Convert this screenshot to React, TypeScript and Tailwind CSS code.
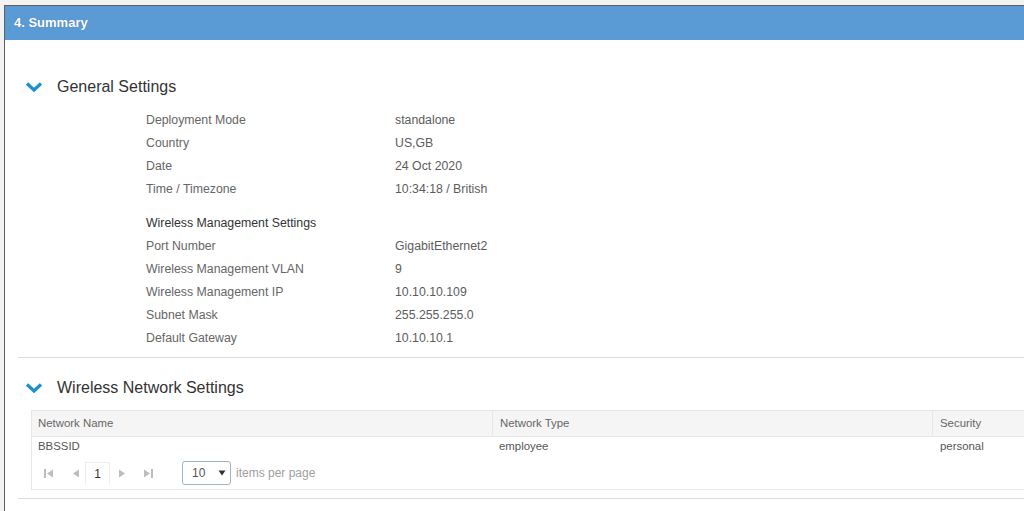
import React from "react";

const Chevron = () => (
  <svg width="18" height="12" viewBox="0 0 18 12" className="shrink-0">
    <path d="M2 2.5 L9 9 L16 2.5" fill="none" stroke="#1a8fd4" strokeWidth="3.2" strokeLinecap="butt" strokeLinejoin="miter" />
  </svg>
);

const Row = ({ label, value }: { label: string; value: string }) => (
  <div className="flex h-[23px] items-center text-[12.3px] text-[#666]">
    <div className="w-[249px] shrink-0">{label}</div>
    <div className="text-[#5c5c5c]">{value}</div>
  </div>
);

const Tri = ({ dir }: { dir: "l" | "r" }) => (
  <svg width="8" height="9" viewBox="0 0 8 9">
    {dir === "l" ? <path d="M7 0.5 L1 4.5 L7 8.5 Z" fill="#bdbdbd" /> : <path d="M1 0.5 L7 4.5 L1 8.5 Z" fill="#bdbdbd" />}
  </svg>
);

export default function App() {
  const font = { fontFamily: '"Liberation Sans", Arial, sans-serif' };
  return (
    <div className="h-[511px] w-[1024px] overflow-hidden bg-[#f3f4f2] pl-[4px] pt-[5px]" style={font}>
      <div className="h-[520px] w-[1040px] border-l border-t border-[#5f5f5f] bg-white">
        <div className="flex h-[34px] items-center bg-[#5b9bd5] pl-[9px] text-[13px] font-bold text-white [text-shadow:0_0_1px_rgba(0,0,0,0.25)]">
          4. Summary
        </div>

        <div className="mt-[35px] flex h-[24px] items-center pl-[20px]">
          <Chevron />
          <span className="ml-[14px] text-[16px] text-[#333]">General Settings</span>
        </div>

        <div className="mt-[10px] pl-[141px]">
          <Row label="Deployment Mode" value="standalone" />
          <Row label="Country" value="US,GB" />
          <Row label="Date" value="24 Oct 2020" />
          <Row label="Time / Timezone" value="10:34:18 / British" />
          <div className="mt-[11px] flex h-[23px] items-center text-[12.3px] text-[#333]">Wireless Management Settings</div>
          <Row label="Port Number" value="GigabitEthernet2" />
          <Row label="Wireless Management VLAN" value="9" />
          <Row label="Wireless Management IP" value="10.10.10.109" />
          <Row label="Subnet Mask" value="255.255.255.0" />
          <Row label="Default Gateway" value="10.10.10.1" />
        </div>

        <div className="ml-[13px] mt-[7px] h-px bg-[#dcdcdc]" />

        <div className="mt-[18px] flex h-[24px] items-center pl-[20px]">
          <Chevron />
          <span className="ml-[14px] text-[16px] text-[#333]">Wireless Network Settings</span>
        </div>

        <div className="ml-[26px] mt-[10px] w-[1010px] border border-[#e6e6e6]">
          <div className="flex h-[26px] items-center border-b border-[#e6e6e6] bg-[#f5f5f5] text-[11.4px] text-[#666]">
            <div className="flex h-full w-[461px] items-center border-r border-[#e6e6e6] pl-[6px]">Network Name</div>
            <div className="flex h-full w-[440px] items-center border-r border-[#e6e6e6] pl-[7px]">Network Type</div>
            <div className="flex h-full items-center pl-[7px]">Security</div>
          </div>
          <div className="flex h-[20px] items-center text-[11.4px] text-[#555]">
            <div className="w-[461px] pl-[6px]">BBSSID</div>
            <div className="w-[440px] pl-[6px]">employee</div>
            <div className="pl-[7px]">personal</div>
          </div>
          <div className="flex h-[32px] items-center text-[12px]">
            <div className="ml-[12px] flex h-[22px] items-center">
              <div className="flex w-[14px] items-center">
                <div className="h-[9px] w-[2px] bg-[#bdbdbd]" />
                <Tri dir="l" />
              </div>
              <div className="ml-[14px] flex w-[8px]"><Tri dir="l" /></div>
              <div className="ml-[5px] flex h-[23px] w-[25px] items-center justify-center border-x border-t border-[#eeeeee] text-[#333]">1</div>
              <div className="ml-[8px] flex w-[8px]"><Tri dir="r" /></div>
              <div className="ml-[17px] flex w-[14px] items-center">
                <Tri dir="r" />
                <div className="h-[9px] w-[2px] bg-[#bdbdbd]" />
              </div>
            </div>
            <div className="ml-[25px] flex h-[24px] w-[49px] items-center rounded-[3px] border border-[#9fb3c4] pl-[9px] text-[#555]">
              <span>10</span>
              <svg width="8" height="6" viewBox="0 0 8 6" className="ml-[13px]"><path d="M0.5 0.5 L7.5 0.5 L4 5.5 Z" fill="#333" /></svg>
            </div>
            <span className="ml-[5px] text-[#a0a0a0]">items per page</span>
          </div>
        </div>

        <div className="ml-[13px] mt-[8px] h-px bg-[#dcdcdc]" />
      </div>
    </div>
  );
}
